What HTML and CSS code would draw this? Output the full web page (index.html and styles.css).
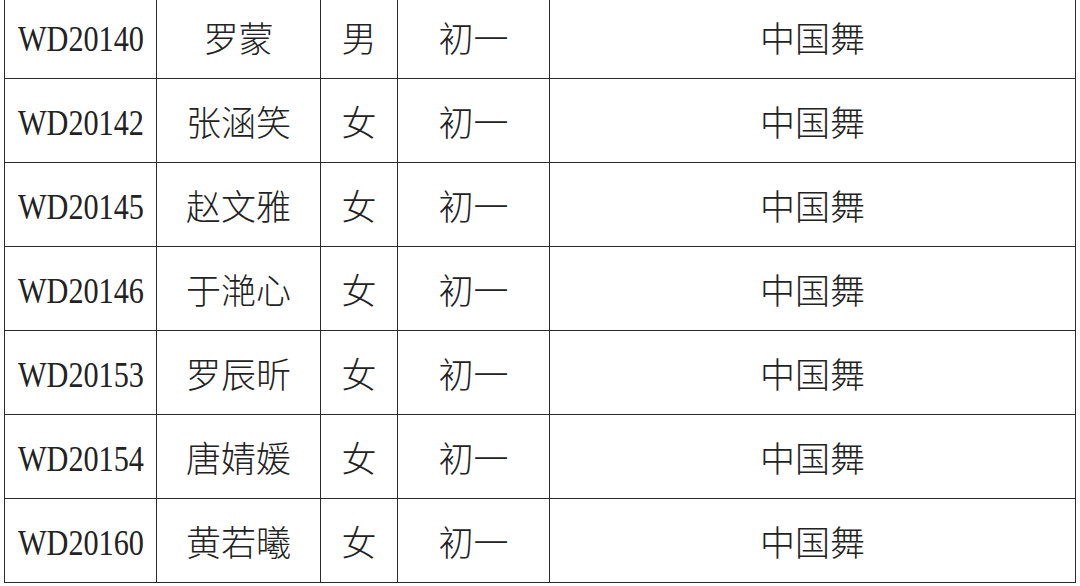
FILE: index.html
```html
<!DOCTYPE html>
<html lang="zh">
<head>
<meta charset="utf-8">
<title>名单</title>
<link rel="stylesheet" href="styles.css">
</head>
<body>
<table class="roster">
  <colgroup>
    <col class="c-id"><col class="c-name"><col class="c-sex"><col class="c-grade"><col class="c-item">
  </colgroup>
  <tbody>
    <tr><td class="id"><span class="code">WD20140</span></td><td>罗蒙</td><td>男</td><td>初一</td><td>中国舞</td></tr>
    <tr><td class="id"><span class="code">WD20142</span></td><td>张涵笑</td><td>女</td><td>初一</td><td>中国舞</td></tr>
    <tr><td class="id"><span class="code">WD20145</span></td><td>赵文雅</td><td>女</td><td>初一</td><td>中国舞</td></tr>
    <tr><td class="id"><span class="code">WD20146</span></td><td>于滟心</td><td>女</td><td>初一</td><td>中国舞</td></tr>
    <tr><td class="id"><span class="code">WD20153</span></td><td>罗辰昕</td><td>女</td><td>初一</td><td>中国舞</td></tr>
    <tr><td class="id"><span class="code">WD20154</span></td><td>唐婧媛</td><td>女</td><td>初一</td><td>中国舞</td></tr>
    <tr><td class="id"><span class="code">WD20160</span></td><td>黄若曦</td><td>女</td><td>初一</td><td>中国舞</td></tr>
  </tbody>
</table>
</body>
</html>
```
FILE: styles.css
```css
html, body {
  margin: 0;
  padding: 0;
  background: #ffffff;
  overflow: hidden;
}

.roster {
  border-collapse: collapse;
  table-layout: fixed;
  width: 1071px;
  margin: -6px 0 0 4px;
  color: #222222;
  font-family: "Noto Sans CJK SC", sans-serif;
  font-weight: 200;
  font-size: 35px;
}

.c-id { width: 152px; }
.c-name { width: 164px; }
.c-sex { width: 77px; }
.c-grade { width: 152px; }
.c-item { width: 526px; }

.roster td {
  border: 1px solid #2a2a2a;
  height: 83px;
  padding: 0;
  text-align: center;
  vertical-align: middle;
  line-height: 1;
  white-space: nowrap;
}

.roster td.id {
  font-family: "Liberation Serif", serif;
  font-weight: 400;
  font-size: 36px;
}

.code {
  display: inline-block;
  transform: scaleX(0.84);
  transform-origin: center;
  position: relative;
  top: 2px;
}
```
